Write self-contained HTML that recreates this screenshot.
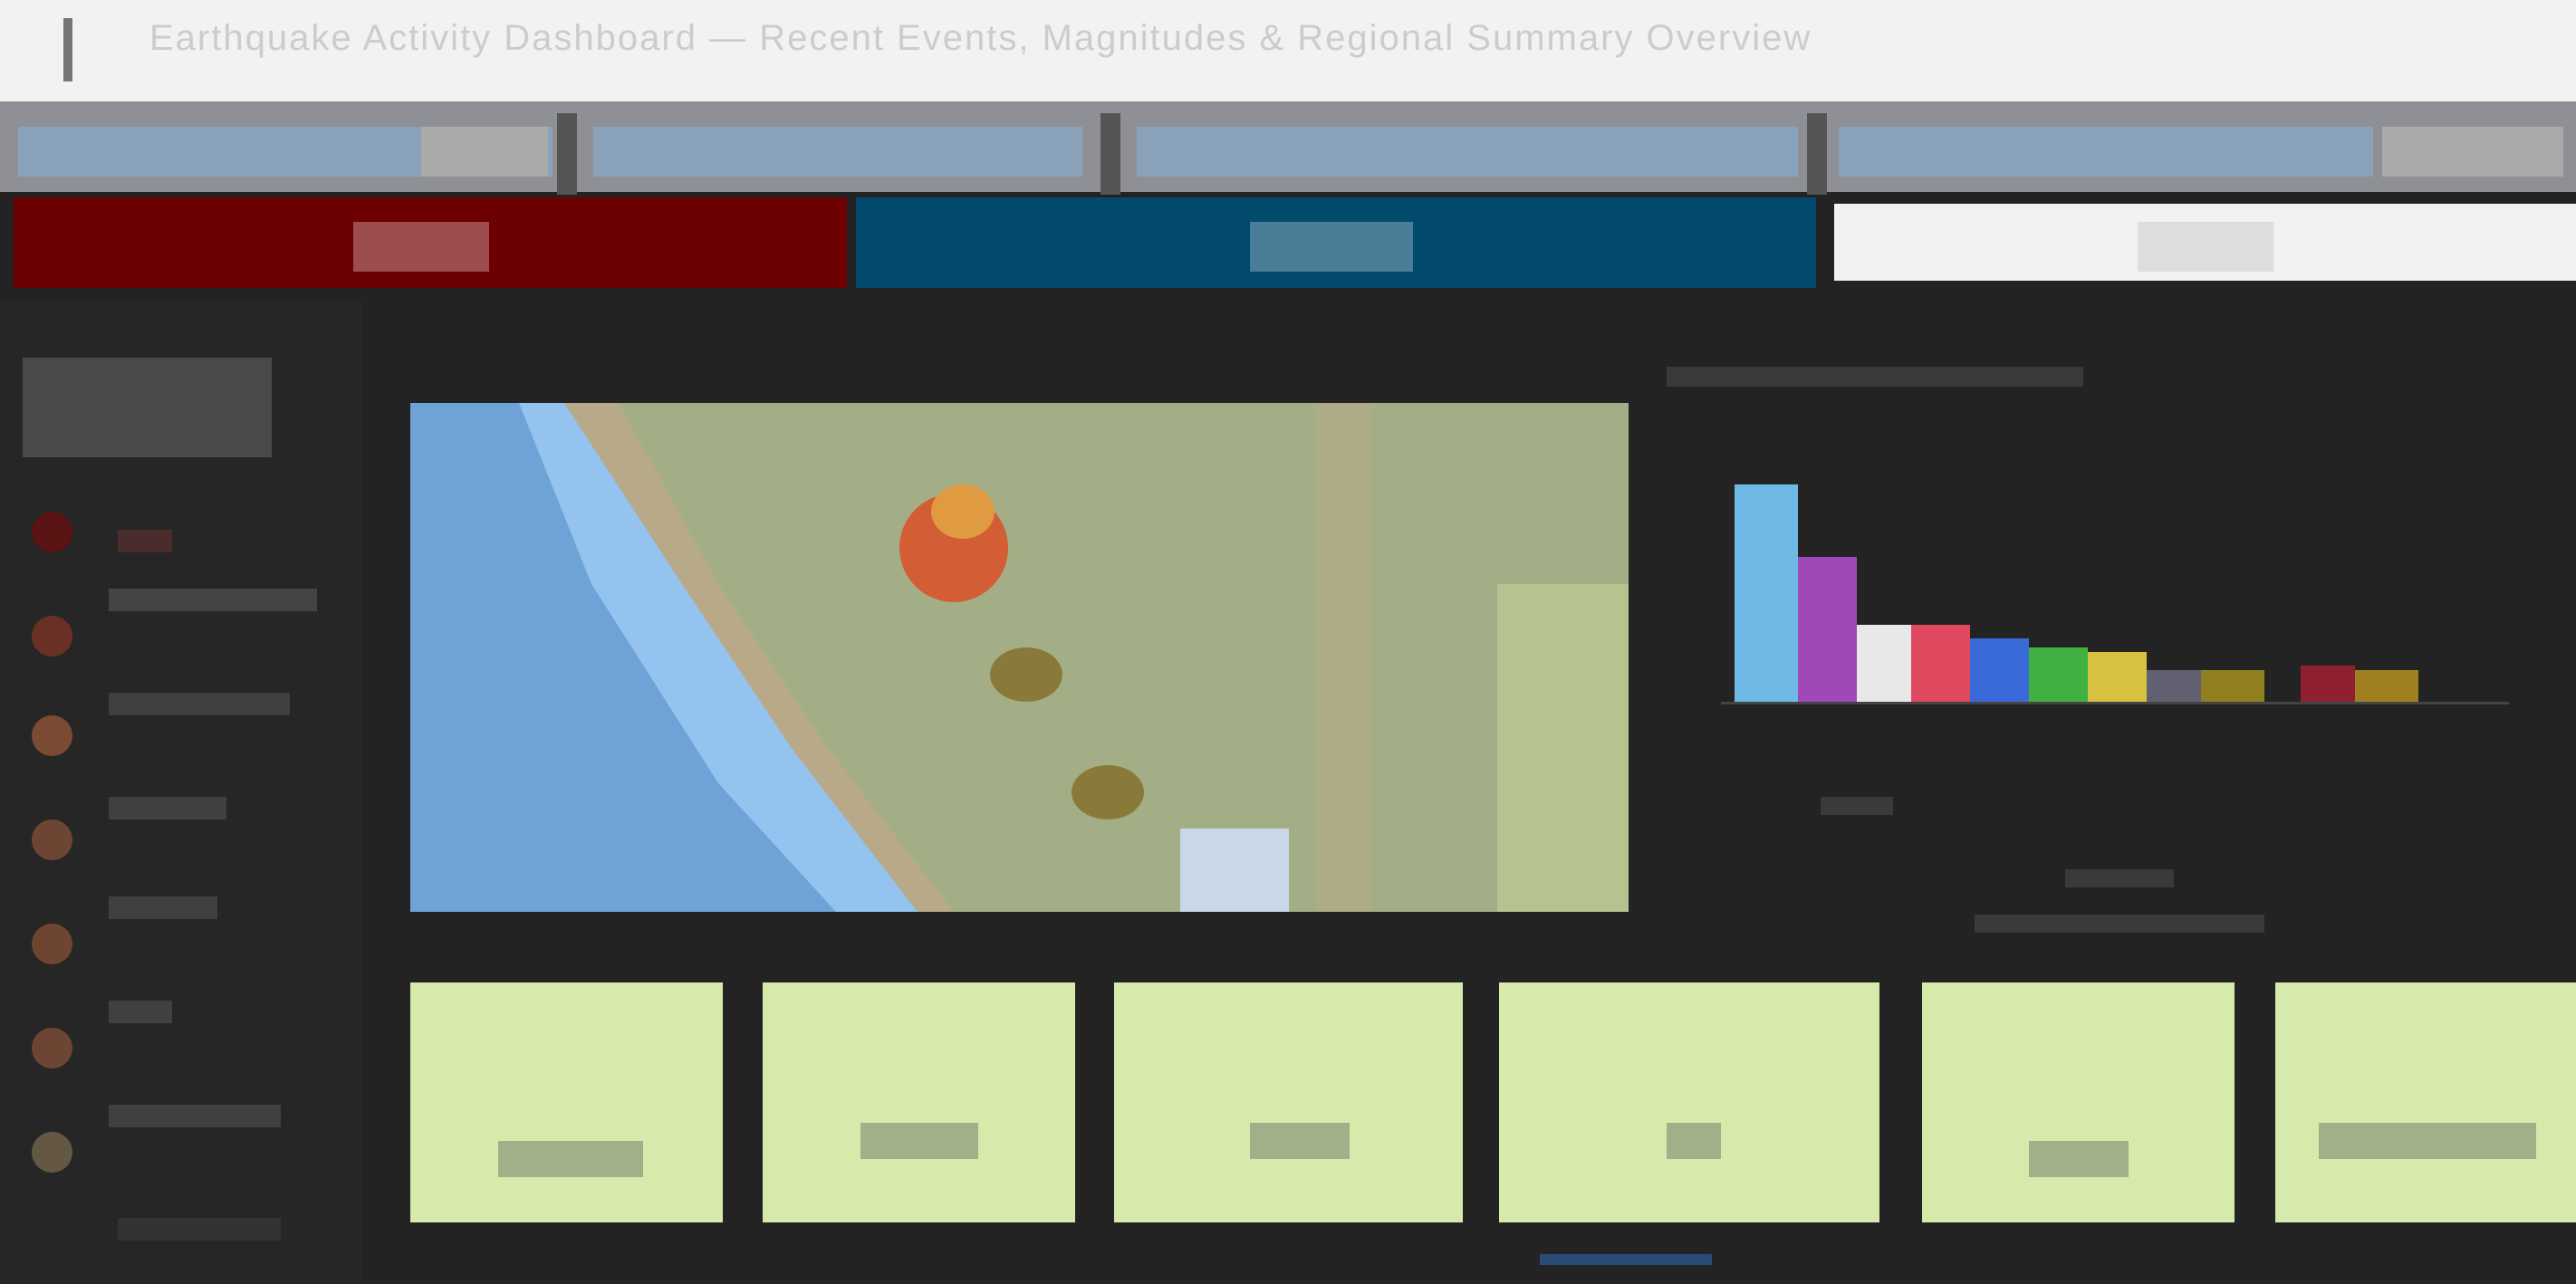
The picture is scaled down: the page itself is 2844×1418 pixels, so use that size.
<!DOCTYPE html>
<html><head><meta charset="utf-8"><style>
*{margin:0;padding:0;box-sizing:border-box}
body{width:2844px;height:1418px;background:#232323;font-family:"Liberation Sans",sans-serif;position:relative;overflow:hidden}
.a{position:absolute}
.t{color:#999;font-size:22px}
</style></head><body>
<div class="a" style="left:0;top:0;width:2844px;height:112px;background:#f2f2f2"></div>
<div class="a" style="left:70;top:20px;left:70px;width:40px;height:70px;border-left:10px solid #777"></div>
<div class="a t" style="left:165px;top:20px;font-size:40px;color:#ccc;letter-spacing:2px">Earthquake Activity Dashboard — Recent Events, Magnitudes &amp; Regional Summary Overview</div>
<div class="a" style="left:0;top:112px;width:2844px;height:100px;background:#8e9096"></div>
<div class="a" style="left:20px;top:140px;width:590px;height:55px;background:#8aa3bb"></div>
<div class="a" style="left:465px;top:140px;width:140px;height:55px;background:#aaa"></div>
<div class="a" style="left:655px;top:140px;width:540px;height:55px;background:#8aa3bb"></div>
<div class="a" style="left:1255px;top:140px;width:730px;height:55px;background:#8aa3bb"></div>
<div class="a" style="left:2030px;top:140px;width:590px;height:55px;background:#8aa3bb"></div>
<div class="a" style="left:2630px;top:140px;width:200px;height:55px;background:#aaa"></div>
<div class="a" style="left:615px;top:125px;width:22px;height:90px;background:#555"></div>
<div class="a" style="left:1215px;top:125px;width:22px;height:90px;background:#555"></div>
<div class="a" style="left:1995px;top:125px;width:22px;height:90px;background:#555"></div>
<div class="a" style="left:15px;top:218px;width:920px;height:100px;background:#6d0000"></div>
<div class="a" style="left:390px;top:245px;width:150px;height:55px;background:#9c4c4c"></div>
<div class="a" style="left:945px;top:218px;width:1060px;height:100px;background:#024a6c"></div>
<div class="a" style="left:1380px;top:245px;width:180px;height:55px;background:#4a7d98"></div>
<div class="a" style="left:2025px;top:225px;width:819px;height:85px;background:#f2f2f2"></div>
<div class="a" style="left:2360px;top:245px;width:150px;height:55px;background:#ddd"></div>
<div class="a" style="left:0;top:330px;width:400px;height:1088px;background:#262626"></div>
<div class="a" style="left:25px;top:395px;width:275px;height:110px;background:#4a4a4a"></div>
<div class="a" style="left:35px;top:565px;width:45px;height:45px;border-radius:50%;background:#5a1414"></div>
<div class="a" style="left:130px;top:585px;width:60px;height:25px;background:#4a2c2c"></div>
<div class="a" style="left:35px;top:680px;width:45px;height:45px;border-radius:50%;background:#6a3025"></div>
<div class="a" style="left:120px;top:650px;width:230px;height:25px;background:#444"></div>
<div class="a" style="left:35px;top:790px;width:45px;height:45px;border-radius:50%;background:#7a4a32"></div>
<div class="a" style="left:120px;top:765px;width:200px;height:25px;background:#404040"></div>
<div class="a" style="left:35px;top:905px;width:45px;height:45px;border-radius:50%;background:#6e4432"></div>
<div class="a" style="left:120px;top:880px;width:130px;height:25px;background:#404040"></div>
<div class="a" style="left:35px;top:1020px;width:45px;height:45px;border-radius:50%;background:#6e4432"></div>
<div class="a" style="left:120px;top:990px;width:120px;height:25px;background:#404040"></div>
<div class="a" style="left:35px;top:1135px;width:45px;height:45px;border-radius:50%;background:#6e4432"></div>
<div class="a" style="left:120px;top:1105px;width:70px;height:25px;background:#404040"></div>
<div class="a" style="left:35px;top:1250px;width:45px;height:45px;border-radius:50%;background:#655842"></div>
<div class="a" style="left:120px;top:1220px;width:190px;height:25px;background:#404040"></div>
<div class="a" style="left:130px;top:1345px;width:180px;height:25px;background:#333"></div>
<svg class="a" style="left:453px;top:445px" width="1345" height="562" viewBox="0 0 1345 562">
<rect width="1345" height="562" fill="#a4ae86"/>
<polygon points="0,0 170,0 300,200 400,360 560,562 0,562" fill="#6fa2d6"/>
<polygon points="120,0 170,0 300,200 420,380 560,562 470,562 340,420 200,200" fill="#93c3ee"/>
<polygon points="170,0 230,0 340,200 460,380 600,562 560,562 420,380 300,200" fill="#b8aa88"/>
<ellipse cx="600" cy="160" rx="60" ry="60" fill="#d35d35"/>
<ellipse cx="610" cy="120" rx="35" ry="30" fill="#e09a40"/>
<ellipse cx="680" cy="300" rx="40" ry="30" fill="#8a7a3a"/>
<ellipse cx="770" cy="430" rx="40" ry="30" fill="#8a7a3a"/>
<rect x="1000" y="0" width="60" height="562" fill="#b7a888" opacity=".5"/>
<rect x="1200" y="200" width="145" height="362" fill="#b6c290"/>
<rect x="850" y="470" width="120" height="92" fill="#c8d8e8"/>
</svg>
<div class="a" style="left:1840px;top:405px;width:460px;height:22px;background:#3a3a3a"></div>
<div class="a" style="left:1915px;top:535px;width:70px;height:240px;background:#6fb9e6"></div>
<div class="a" style="left:1985px;top:615px;width:65px;height:160px;background:#a048b8"></div>
<div class="a" style="left:2050px;top:690px;width:60px;height:85px;background:#e8e8e8"></div>
<div class="a" style="left:2110px;top:690px;width:65px;height:85px;background:#e04860"></div>
<div class="a" style="left:2175px;top:705px;width:65px;height:70px;background:#3a6ad8"></div>
<div class="a" style="left:2240px;top:715px;width:65px;height:60px;background:#40b040"></div>
<div class="a" style="left:2305px;top:720px;width:65px;height:55px;background:#d8c040"></div>
<div class="a" style="left:2370px;top:740px;width:60px;height:35px;background:#606070"></div>
<div class="a" style="left:2430px;top:740px;width:70px;height:35px;background:#908020"></div>
<div class="a" style="left:2540px;top:735px;width:60px;height:40px;background:#902030"></div>
<div class="a" style="left:2600px;top:740px;width:70px;height:35px;background:#a08020"></div>
<div class="a" style="left:1900px;top:775px;width:870px;height:3px;background:#444"></div>
<div class="a" style="left:2010px;top:880px;width:80px;height:20px;background:#3a3a3a"></div>
<div class="a" style="left:2280px;top:960px;width:120px;height:20px;background:#3a3a3a"></div>
<div class="a" style="left:2180px;top:1010px;width:320px;height:20px;background:#3a3a3a"></div>
<div class="a" style="left:453px;top:1085px;width:345px;height:265px;background:#d6eaac"></div>
<div class="a" style="left:842px;top:1085px;width:345px;height:265px;background:#d6eaac"></div>
<div class="a" style="left:1230px;top:1085px;width:385px;height:265px;background:#d6eaac"></div>
<div class="a" style="left:1655px;top:1085px;width:420px;height:265px;background:#d6eaac"></div>
<div class="a" style="left:2122px;top:1085px;width:345px;height:265px;background:#d6eaac"></div>
<div class="a" style="left:2512px;top:1085px;width:332px;height:265px;background:#d6eaac"></div>
<div class="a" style="left:550px;top:1260px;width:160px;height:40px;background:#a0b088"></div>
<div class="a" style="left:950px;top:1240px;width:130px;height:40px;background:#a0b088"></div>
<div class="a" style="left:1380px;top:1240px;width:110px;height:40px;background:#a0b088"></div>
<div class="a" style="left:1840px;top:1240px;width:60px;height:40px;background:#a0b088"></div>
<div class="a" style="left:2240px;top:1260px;width:110px;height:40px;background:#a0b088"></div>
<div class="a" style="left:2560px;top:1240px;width:240px;height:40px;background:#a0b088"></div>
<div class="a" style="left:1700px;top:1385px;width:190px;height:12px;background:#2a4a7a"></div>
</body></html>
